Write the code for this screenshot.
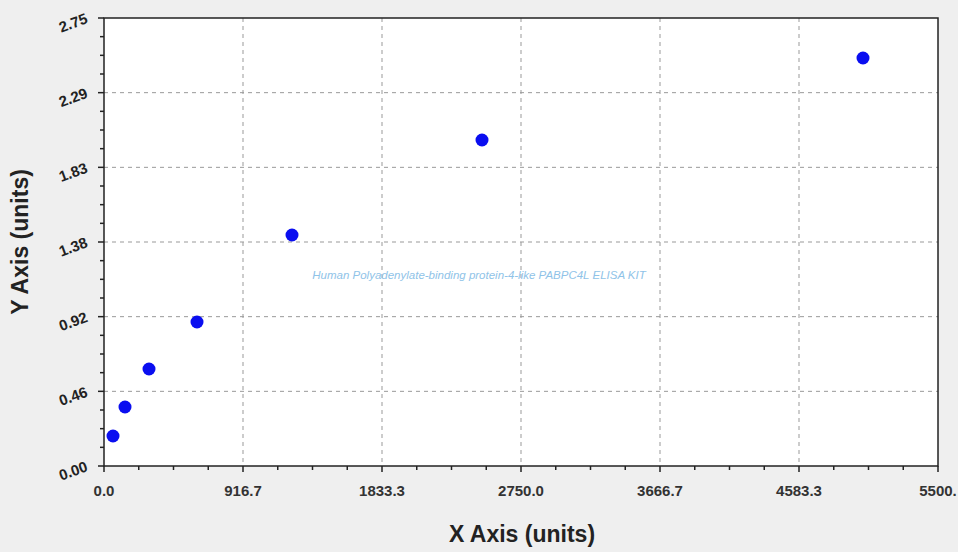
export default function App() {
  const L = 104, R = 938, T = 18, B = 466;
  const W = R - L, H = B - T;
  const xs = [0, 1, 2, 3, 4, 5, 6].map((i) => L + (W * i) / 6);
  const ys = [0, 1, 2, 3, 4, 5, 6].map((i) => B - (H * i) / 6);
  const xLabels = ["0.0", "916.7", "1833.3", "2750.0", "3666.7", "4583.3", "5500."];
  const yLabels = ["0.00", "0.46", "0.92", "1.38", "1.83", "2.29", "2.75"];
  const pts = [[113, 436], [125, 407], [149, 369], [197, 322], [292, 235], [482, 140], [863, 58]];
  const minorX = Array.from({ length: 25 }, (_, i) => L + (W * i) / 24);
  const minorY = Array.from({ length: 25 }, (_, i) => B - (H * i) / 24);
  return (
    <div className="w-[958px] h-[552px] bg-[#efefef] overflow-hidden" style={{ fontFamily: "'Liberation Sans', Arial, sans-serif" }}>
      <svg width="958" height="552" className="block">
        <rect x={L} y={T} width={W} height={H} fill="#fff" />
        {xs.slice(1, 6).map((x) => (
          <line key={x} x1={x} y1={T} x2={x} y2={B} stroke="#999" strokeDasharray="4 4" />
        ))}
        {ys.slice(1, 6).map((y) => (
          <line key={y} x1={L} y1={y} x2={R} y2={y} stroke="#999" strokeDasharray="4 4" />
        ))}
        <rect x={L} y={T} width={W} height={H} fill="none" stroke="#222" strokeWidth="1.5" />
        {minorX.map((x, i) => (
          <line key={"mx" + i} x1={x} y1={B} x2={x} y2={B + (i % 4 === 0 ? 6 : 4)} stroke="#222" strokeWidth="1.5" />
        ))}
        {minorY.map((y, i) => (
          <line key={"my" + i} x1={L} y1={y} x2={L - (i % 4 === 0 ? 6 : 4)} y2={y} stroke="#222" strokeWidth="1.5" />
        ))}
        {xLabels.map((t, i) => (
          <text key={t} x={xs[i]} y={496} textAnchor="middle" fontSize="15" fontWeight="bold" fill="#333">{t}</text>
        ))}
        {yLabels.map((t, i) => (
          <text key={t} x={87} y={ys[i] + 5} textAnchor="end" fontSize="15" fontWeight="bold" fill="#222" transform={`rotate(-20 87 ${ys[i]})`}>{t}</text>
        ))}
        <text x={522} y={542} textAnchor="middle" fontSize="23" fontWeight="bold" fill="#222">X Axis (units)</text>
        <text x={28} y={242} textAnchor="middle" fontSize="23" fontWeight="bold" fill="#222" transform="rotate(-90 28 242)">Y Axis (units)</text>
        <text x={479} y={279} textAnchor="middle" fontSize="11.5" fontStyle="italic" fill="#8fc3e8">Human Polyadenylate-binding protein-4-like PABPC4L ELISA KIT</text>
        {pts.map(([x, y]) => (
          <circle key={x} cx={x} cy={y} r="6.5" fill="#0a0ef0" />
        ))}
      </svg>
    </div>
  );
}
